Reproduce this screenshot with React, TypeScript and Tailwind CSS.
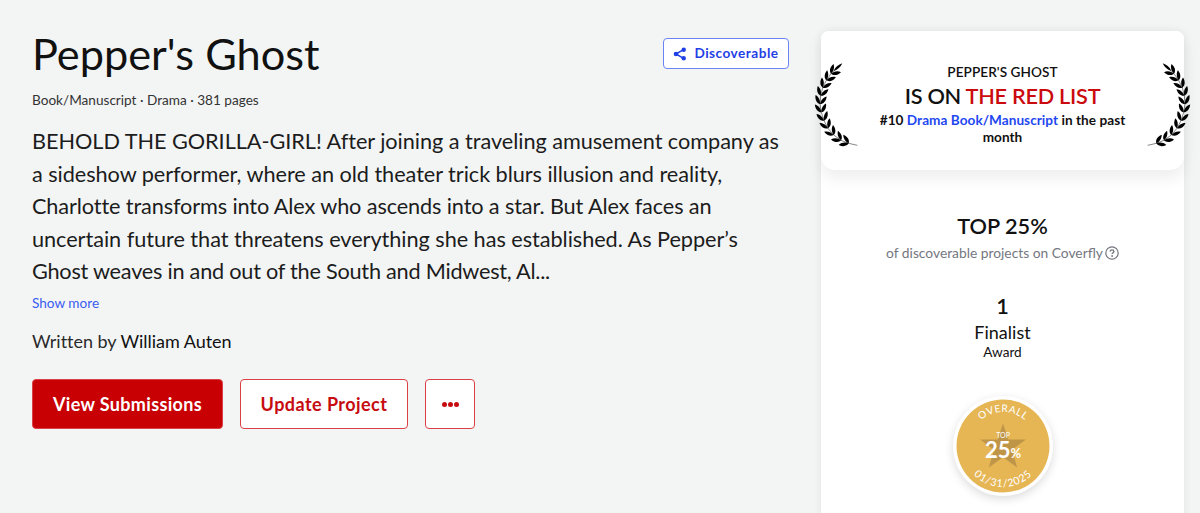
import type { ReactNode } from "react";

// Stem points of one laurel branch, from the base up to the tip
const STEM = [
  [107, 244],
  [84, 235],
  [62, 219],
  [45, 199],
  [33, 176],
  [25, 151],
  [21, 126],
  [23, 101],
  [29, 77],
  [40, 55],
  [54, 35],
  [70, 19],
];

const LEAF = "M0 0C5 -8 17 -11 30 -4C21 4 9 4 0 0Z";

const SYNOPSIS = [
  { text: "BEHOLD THE GORILLA-GIRL! After joining a traveling amusement company as", tracking: "tracking-[-0.045px]" },
  { text: "a sideshow performer, where an old theater trick blurs illusion and reality,", tracking: "tracking-[-0.050px]" },
  { text: "Charlotte transforms into Alex who ascends into a star. But Alex faces an", tracking: "tracking-[-0.120px]" },
  { text: "uncertain future that threatens everything she has established. As Pepper’s", tracking: "tracking-[-0.045px]" },
  { text: "Ghost weaves in and out of the South and Midwest, Al...", tracking: "tracking-[-0.240px]" },
];

function Laurel({ className }: { className: string }) {
  return (
    <svg viewBox="0 0 135 255" className={className}>
      <polyline
        points={[[133, 250], ...STEM].map((p) => p.join(",")).join(" ")}
        fill="none"
        stroke="#111"
        strokeWidth="1.500"
      />
      {STEM.slice(0, -1).map(([x, y], i) => {
        const [nx, ny] = STEM[i + 1];
        const angle = (Math.atan2(ny - y, nx - x) * 180) / Math.PI;
        return (
          <g key={i} transform={`translate(${x} ${y})`}>
            <path d={LEAF} transform={`rotate(${angle - 23})`} />
            <path d={LEAF} transform={`rotate(${angle + 29}) scale(1 -1)`} />
          </g>
        );
      })}
      <path d="M62 27C68 14 76 8 88 4C82 16 75 23 62 27Z" />
    </svg>
  );
}

function ShareIcon() {
  return (
    <svg viewBox="0 0 14 14" className="h-[14px] w-[14px]" fill="currentColor">
      <path d="M10.5 2.7L3 7l7.500 4.300" fill="none" stroke="currentColor" strokeWidth="1.500" />
      <circle cx="10.700" cy="2.700" r="2.200" />
      <circle cx="3" cy="7" r="2.300" />
      <circle cx="10.700" cy="11.300" r="2.200" />
    </svg>
  );
}

function HelpIcon() {
  return (
    <svg viewBox="0 0 14 14" className="h-[14px] w-[14px]" fill="none" stroke="currentColor">
      <circle cx="7" cy="7" r="6.200" strokeWidth="1.200" />
      <path d="M5.200 5.600C5.200 3.300 8.900 3.400 8.900 5.500C8.900 6.700 7.100 6.800 7.100 8.100" strokeWidth="1.400" />
      <circle cx="7.100" cy="10" r=".9" fill="currentColor" stroke="none" />
    </svg>
  );
}

function Medal() {
  return (
    <svg
      viewBox="0 0 100 100"
      className="h-[100px] w-[100px] rounded-full bg-white shadow-[0_3px_10px_rgba(0,0,0,0.14)]"
      fill="#fff"
      textAnchor="middle"
    >
      <defs>
        <path id="arc-top" d="M16 50A34 34 0 0 1 84 50" />
        <path id="arc-bottom" d="M9 50A41 41 0 0 0 91 50" />
      </defs>
      <circle cx="50" cy="50" r="46.500" fill="#e6b655" />
      <path
        d="M50 27.500L55.400 43.500H73L59 53.800L64.200 71.500L50 61.200L35.800 71.500L41 53.800L27 43.500H44.600Z"
        fill="#bf9648"
      />
      <text fontSize="10.200" letterSpacing="0.5">
        <textPath href="#arc-top" startOffset="50%">OVERALL</textPath>
      </text>
      <text x="50" y="41.500" fontSize="7">TOP</text>
      <text x="50" y="62" fontSize="22" fontWeight="700">
        25<tspan fontSize="13">%</tspan>
      </text>
      <text fontSize="10.500" letterSpacing="0.7">
        <textPath href="#arc-bottom" startOffset="50%">01/31/2025</textPath>
      </text>
    </svg>
  );
}

function OutlineButton({ className, children }: { className: string; children: ReactNode }) {
  return (
    <button
      className={`flex h-[50px] items-center justify-center rounded-[4px] border border-[#d94145] bg-white pt-[2px] text-[18px] font-bold text-[#c60c10] ${className}`}
    >
      {children}
    </button>
  );
}

export default function App() {
  return (
    <div className="flex h-[513px] w-[1200px] overflow-hidden bg-[#f3f5f5] pl-8 font-[Lato,sans-serif] text-[#111]">
      {/* Project details */}
      <main className="w-[757px] shrink-0 pt-[28px]">
        <div className="flex items-start justify-between">
          <h1 className="-mt-px text-[43.300px] leading-[52px]">Pepper's Ghost</h1>
          <button className="mt-[10px] flex h-[31px] w-[126px] items-center justify-center gap-[7px] rounded-[4px] border border-[#6c83f5] bg-white text-[13.600px] font-bold tracking-[0.5px] text-[#1f40e6]">
            <ShareIcon />
            Discoverable
          </button>
        </div>
        <p className="mt-[12px] text-[13.600px] leading-[18px] text-[#333]">
          Book/Manuscript · Drama · 381 pages
        </p>
        <p className="mt-[16px] text-[21.700px] leading-[32.600px] whitespace-nowrap text-[#1c1c1c]">
          {SYNOPSIS.map(({ text, tracking }) => (
            <span key={text} className={`block ${tracking}`}>
              {text}
            </span>
          ))}
        </p>
        <a className="mt-[6px] block text-[13.600px] leading-[18px] text-[#3a5cf0]">Show more</a>
        <p className="mt-[17px] text-[18px] leading-[24px] tracking-[-0.030px]">
          <span className="text-[#2a2a2a]">Written by</span> William Auten
        </p>
        <div className="mt-[26px] flex">
          <button className="h-[50px] w-[191px] rounded-[4px] border border-[#d94145] bg-[#c90003] pt-[2px] text-[18px] font-bold tracking-[0.350px] text-white">
            View Submissions
          </button>
          <OutlineButton className="ml-[17px] w-[168px] tracking-[0.450px]">Update Project</OutlineButton>
          <OutlineButton className="ml-[17px] w-[50px] gap-px">
            <span className="h-[5px] w-[5px] rounded-full bg-current" />
            <span className="h-[5px] w-[5px] rounded-full bg-current" />
            <span className="h-[5px] w-[5px] rounded-full bg-current" />
          </OutlineButton>
        </div>
      </main>

      {/* Accolades */}
      <aside className="mt-[31px] ml-[32px] h-[520px] w-[363px] shrink-0 rounded-t-[8px] bg-white text-center shadow-[0_0_10px_rgba(0,0,0,0.07)]">
        <div className="relative h-[139px] rounded-t-[8px] rounded-b-[14px] bg-white px-[50px] pt-[32px] shadow-[0_8px_16px_rgba(0,0,0,0.07)]">
          <Laurel className="absolute top-[31px] -left-[8px] h-[85px] w-[45px]" />
          <Laurel className="absolute top-[31px] -right-[8px] h-[85px] w-[45px] -scale-x-100" />
          <p className="text-[13.600px] leading-[18px] font-semibold tracking-[0.050px]">PEPPER'S GHOST</p>
          <p className="text-[21.700px] leading-[31px] font-semibold tracking-[-0.250px]">
            IS ON <span className="text-[#cb0a0d]">THE RED LIST</span>
          </p>
          <p className="text-[13.600px] leading-[17px] font-bold tracking-[0.040px]">
            #10 <span className="text-[#1f48f0]">Drama Book/Manuscript</span> in the past month
          </p>
        </div>
        <div className="flex flex-col items-center pt-[42px]">
          <p className="text-[21.700px] leading-[28px] font-semibold">TOP 25%</p>
          <p className="mt-[4px] flex items-center gap-[2px] text-[13.800px] leading-[18px] text-[#74777f]">
            of discoverable projects on Coverfly <HelpIcon />
          </p>
          <p className="mt-[30px] text-[21.700px] leading-[28px] font-semibold">1</p>
          <p className="text-[18px] leading-[24px]">Finalist</p>
          <p className="text-[13.600px] leading-[16px]">Award</p>
          <div className="mt-[36px]">
            <Medal />
          </div>
        </div>
      </aside>
    </div>
  );
}
